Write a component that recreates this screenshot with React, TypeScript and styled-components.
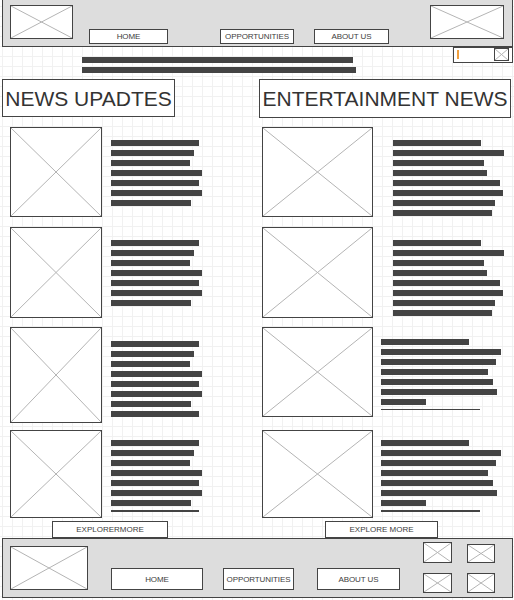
import React from "react";
import styled, { createGlobalStyle } from "styled-components";

const Global = createGlobalStyle`
  * { box-sizing: border-box; }
  html, body { margin: 0; padding: 0; background: #fff; }
  body { font-family: "Liberation Sans", Arial, sans-serif; }
`;

const Page = styled.div`
  width: 514px;
  height: 600px;
  overflow: hidden;
  background-color: #fff;
  background-image: linear-gradient(to right, #f1f1f1 1px, transparent 1px),
    linear-gradient(to bottom, #f1f1f1 1px, transparent 1px);
  background-size: 10px 10px;
  background-position: 2px 6px;
  display: flex;
  flex-direction: column;
`;

const Header = styled.header`
  margin-left: 2px;
  width: 511px;
  height: 47px;
  flex-shrink: 0;
  background: #ddd;
  border: 1px solid #444;
  border-top: none;
  display: flex;
  align-items: flex-start;
  padding: 5px 8px 0 7px;
`;

const Box = styled.div<{ $w: number; $h: number; $mt?: number }>`
  width: ${(p) => p.$w}px;
  height: ${(p) => p.$h}px;
  margin-top: ${(p) => p.$mt ?? 0}px;
  flex-shrink: 0;
  background: #fff;
  border: 1px solid #444;
  svg { display: block; width: 100%; height: 100%; }
`;

const Placeholder = ({ w, h, mt }: { w: number; h: number; mt?: number }) => (
  <Box $w={w} $h={h} $mt={mt}>
    <svg viewBox="0 0 100 100" preserveAspectRatio="none">
      <line x1="0" y1="0" x2="100" y2="100" stroke="#b4b4b4" strokeWidth="1" vectorEffect="non-scaling-stroke" />
      <line x1="100" y1="0" x2="0" y2="100" stroke="#b4b4b4" strokeWidth="1" vectorEffect="non-scaling-stroke" />
    </svg>
  </Box>
);

const NavButton = styled.div<{ $w: number; $h: number; $ml: number; $mt: number }>`
  width: ${(p) => p.$w}px;
  height: ${(p) => p.$h}px;
  margin-left: ${(p) => p.$ml}px;
  margin-top: ${(p) => p.$mt}px;
  flex-shrink: 0;
  background: #fff;
  border: 1px solid #444;
  display: flex;
  align-items: center;
  justify-content: center;
  font-size: 8px;
  color: #3c3c3c;
  white-space: nowrap;
  letter-spacing: -0.1px;
`;

const RightLogo = styled.div`
  margin-left: auto;
`;

const SubRow = styled.div`
  height: 32px;
  flex-shrink: 0;
  display: flex;
  align-items: flex-start;
`;

const BarStack = styled.div<{ $ml: number; $pt: number; $h?: number }>`
  margin-left: ${(p) => p.$ml}px;
  padding-top: ${(p) => p.$pt}px;
  ${(p) => (p.$h ? `height: ${p.$h}px; overflow: hidden;` : "")}
  display: flex;
  flex-direction: column;
  gap: 4px;
  flex-shrink: 0;
`;

const Bar = styled.div<{ $w: number }>`
  width: ${(p) => p.$w}px;
  height: 6px;
  flex-shrink: 0;
  background: #444;
`;

const SearchBox = styled.div`
  margin-left: auto;
  margin-right: 1px;
  width: 60px;
  height: 16px;
  background: #fff;
  border: 1px solid #444;
  display: flex;
  align-items: flex-start;
  padding: 0 3px 0 3px;
`;

const Caret = styled.div`
  width: 2px;
  height: 9px;
  margin-top: 2px;
  background: #f0a040;
`;

const SearchIcon = styled.div`
  margin-left: auto;
`;

const Main = styled.div`
  display: flex;
  align-items: flex-start;
  flex-shrink: 0;
`;

const Column = styled.section<{ $ml: number; $w: number }>`
  margin-left: ${(p) => p.$ml}px;
  width: ${(p) => p.$w}px;
  display: flex;
  flex-direction: column;
`;

const Title = styled.h2<{ $w: number; $h: number }>`
  margin: 0;
  width: ${(p) => p.$w}px;
  height: ${(p) => p.$h}px;
  border: 1px solid #444;
  background: #fff;
  display: flex;
  align-items: center;
  justify-content: center;
  font-size: 21px;
  font-weight: normal;
  color: #333;
  white-space: nowrap;
  line-height: 1;
`;

const CardList = styled.div<{ $pl: number }>`
  padding-left: ${(p) => p.$pl}px;
  display: flex;
  flex-direction: column;
`;

const Card = styled.article<{ $mt: number }>`
  display: flex;
  align-items: flex-start;
  margin-top: ${(p) => p.$mt}px;
`;

const ExploreButton = styled.div<{ $ml: number; $w: number }>`
  margin-top: 3px;
  margin-left: ${(p) => p.$ml}px;
  width: ${(p) => p.$w}px;
  height: 17px;
  background: #fff;
  border: 1px solid #444;
  display: flex;
  align-items: center;
  justify-content: center;
  font-size: 8px;
  color: #3c3c3c;
  white-space: nowrap;
`;

const Footer = styled.footer`
  margin-left: 2px;
  width: 511px;
  height: 60px;
  flex-shrink: 0;
  background: #ddd;
  border: 1px solid #444;
  display: flex;
  align-items: flex-start;
  padding: 3px 0 0 7px;
`;

const IconGrid = styled.div`
  margin-left: 23px;
  display: grid;
  grid-template-columns: 29px 28px;
  grid-template-rows: 21px 20px;
  column-gap: 15px;
  row-gap: 10px;
  align-items: start;
`;

const LEFT = [88, 83, 79, 91, 88, 91, 80];
const LEFT8 = [88, 83, 79, 91, 88, 91, 80, 88];
const RIGHT_A = [88, 111, 91, 94, 107, 110, 102, 99];
const RIGHT_B = [88, 120, 115, 107, 112, 116, 45, 99];

type CardDef = { mt: number; w: number; h: number; ml: number; pt: number; bars: number[]; clip?: number };

const leftCards: CardDef[] = [
  { mt: 10, w: 92, h: 90, ml: 9, pt: 13, bars: LEFT },
  { mt: 10, w: 92, h: 91, ml: 9, pt: 13, bars: LEFT },
  { mt: 9, w: 92, h: 96, ml: 9, pt: 14, bars: LEFT8 },
  { mt: 7, w: 92, h: 88, ml: 9, pt: 10, bars: LEFT8, clip: 82 },
];

const rightCards: CardDef[] = [
  { mt: 9, w: 111, h: 90, ml: 20, pt: 13, bars: RIGHT_A },
  { mt: 10, w: 111, h: 91, ml: 20, pt: 13, bars: RIGHT_A },
  { mt: 9, w: 111, h: 90, ml: 8, pt: 12, bars: RIGHT_B, clip: 83 },
  { mt: 13, w: 111, h: 88, ml: 8, pt: 10, bars: RIGHT_B, clip: 82 },
];

const renderCards = (cards: CardDef[]) =>
  cards.map((c, i) => (
    <Card key={i} $mt={c.mt}>
      <Placeholder w={c.w} h={c.h} />
      <BarStack $ml={c.ml} $pt={c.pt} $h={c.clip}>
        {c.bars.map((b, j) => (
          <Bar key={j} $w={b} />
        ))}
      </BarStack>
    </Card>
  ));

export default function App() {
  return (
    <>
      <Global />
      <Page>
        <Header>
          <Placeholder w={63} h={34} />
          <NavButton $w={79} $h={15} $ml={16} $mt={24}>HOME</NavButton>
          <NavButton $w={74} $h={15} $ml={52} $mt={24}>OPPORTUNITIES</NavButton>
          <NavButton $w={75} $h={15} $ml={20} $mt={24}>ABOUT US</NavButton>
          <RightLogo>
            <Placeholder w={74} h={34} />
          </RightLogo>
        </Header>

        <SubRow>
          <BarStack $ml={82} $pt={10}>
            <Bar $w={271} />
            <Bar $w={274} />
          </BarStack>
          <SearchBox>
            <Caret />
            <SearchIcon>
              <Placeholder w={15} h={13} mt={0} />
            </SearchIcon>
          </SearchBox>
        </SubRow>

        <Main>
          <Column $ml={2} $w={257}>
            <Title $w={173} $h={38}>NEWS UPADTES</Title>
            <CardList $pl={8}>{renderCards(leftCards)}</CardList>
            <ExploreButton $ml={50} $w={116}>EXPLORERMORE</ExploreButton>
          </Column>
          <Column $ml={0} $w={255}>
            <Title $w={252} $h={39}>ENTERTAINMENT NEWS</Title>
            <CardList $pl={3}>{renderCards(rightCards)}</CardList>
            <ExploreButton $ml={66} $w={113}>EXPLORE MORE</ExploreButton>
          </Column>
        </Main>

        <Footer>
          <Placeholder w={78} h={44} mt={4} />
          <NavButton $w={92} $h={22} $ml={23} $mt={26}>HOME</NavButton>
          <NavButton $w={71} $h={22} $ml={20} $mt={26}>OPPORTUNITIES</NavButton>
          <NavButton $w={83} $h={22} $ml={23} $mt={26}>ABOUT US</NavButton>
          <IconGrid>
            <Placeholder w={29} h={21} />
            <Placeholder w={28} h={19} mt={2} />
            <Placeholder w={29} h={20} />
            <Placeholder w={28} h={20} />
          </IconGrid>
        </Footer>
      </Page>
    </>
  );
}
